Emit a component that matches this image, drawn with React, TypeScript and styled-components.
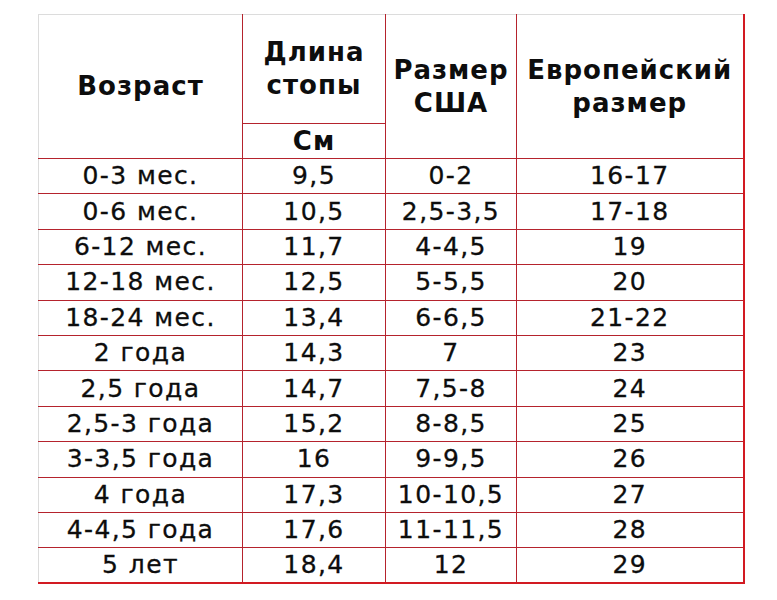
import React from "react";
import styled, { createGlobalStyle } from "styled-components";

const Global = createGlobalStyle`
  html, body { margin: 0; padding: 0; background: #fff; }
  body { font-family: "DejaVu Sans", Verdana, sans-serif; }
`;

const Page = styled.div`
  width: 777px;
  height: 600px;
  padding: 14px 0 0 38px;
  box-sizing: border-box;
  background: #fff;
`;

const Table = styled.table`
  border-collapse: collapse;
  table-layout: fixed;
  width: 705px;
  color: #0d0d0d;
`;

const HeadCell = styled.th<{ $h?: number }>`
  font-weight: bold;
  font-size: 26px;
  letter-spacing: 1px;
  line-height: 33px;
  text-align: center;
  vertical-align: middle;
  padding: 0;
  white-space: nowrap;
  border: 1px solid #b5232d;
  border-top-color: #dcdcdc;
  height: ${(p) => (p.$h ? `${p.$h}px` : "auto")};
  &:first-child { border-left-color: #dcdcdc; }
  &:last-child { border-right: 2px solid #d21a22; }
`;

const SubHeadCell = styled.th`
  font-weight: bold;
  font-size: 26px;
  letter-spacing: 1px;
  line-height: 30px;
  text-align: center;
  padding: 0;
  height: 34px;
  border: 1px solid #b5232d;
`;

const Row = styled.tr`
  height: 35.4px;
  &:last-child td { border-bottom: 2px solid #d21a22; }
`;

const Cell = styled.td`
  font-size: 25px;
  letter-spacing: 1.4px;
  line-height: 30px;
  text-align: center;
  vertical-align: middle;
  padding: 0;
  white-space: nowrap;
  -webkit-text-stroke: 0.3px #0d0d0d;
  border: 1px solid #b5232d;
  &:first-child { border-left-color: #dcdcdc; }
  &:last-child { border-right: 2px solid #d21a22; }
`;

const rows: [string, string, string, string][] = [
  ["0-3 мес.", "9,5", "0-2", "16-17"],
  ["0-6 мес.", "10,5", "2,5-3,5", "17-18"],
  ["6-12 мес.", "11,7", "4-4,5", "19"],
  ["12-18 мес.", "12,5", "5-5,5", "20"],
  ["18-24 мес.", "13,4", "6-6,5", "21-22"],
  ["2 года", "14,3", "7", "23"],
  ["2,5 года", "14,7", "7,5-8", "24"],
  ["2,5-3 года", "15,2", "8-8,5", "25"],
  ["3-3,5 года", "16", "9-9,5", "26"],
  ["4 года", "17,3", "10-10,5", "27"],
  ["4-4,5 года", "17,6", "11-11,5", "28"],
  ["5 лет", "18,4", "12", "29"],
];

export default function App() {
  return (
    <>
      <Global />
      <Page>
        <Table>
          <colgroup>
            <col style={{ width: 204 }} />
            <col style={{ width: 143 }} />
            <col style={{ width: 131 }} />
            <col style={{ width: 227 }} />
          </colgroup>
          <thead>
            <tr>
              <HeadCell rowSpan={2}>Возраст</HeadCell>
              <HeadCell $h={108}>
                Длина
                <br />
                стопы
              </HeadCell>
              <HeadCell rowSpan={2}>
                Размер
                <br />
                США
              </HeadCell>
              <HeadCell rowSpan={2}>
                Европейский
                <br />
                размер
              </HeadCell>
            </tr>
            <tr>
              <SubHeadCell>См</SubHeadCell>
            </tr>
          </thead>
          <tbody>
            {rows.map((r, i) => (
              <Row key={i}>
                {r.map((c, j) => (
                  <Cell key={j}>{c}</Cell>
                ))}
              </Row>
            ))}
          </tbody>
        </Table>
      </Page>
    </>
  );
}
